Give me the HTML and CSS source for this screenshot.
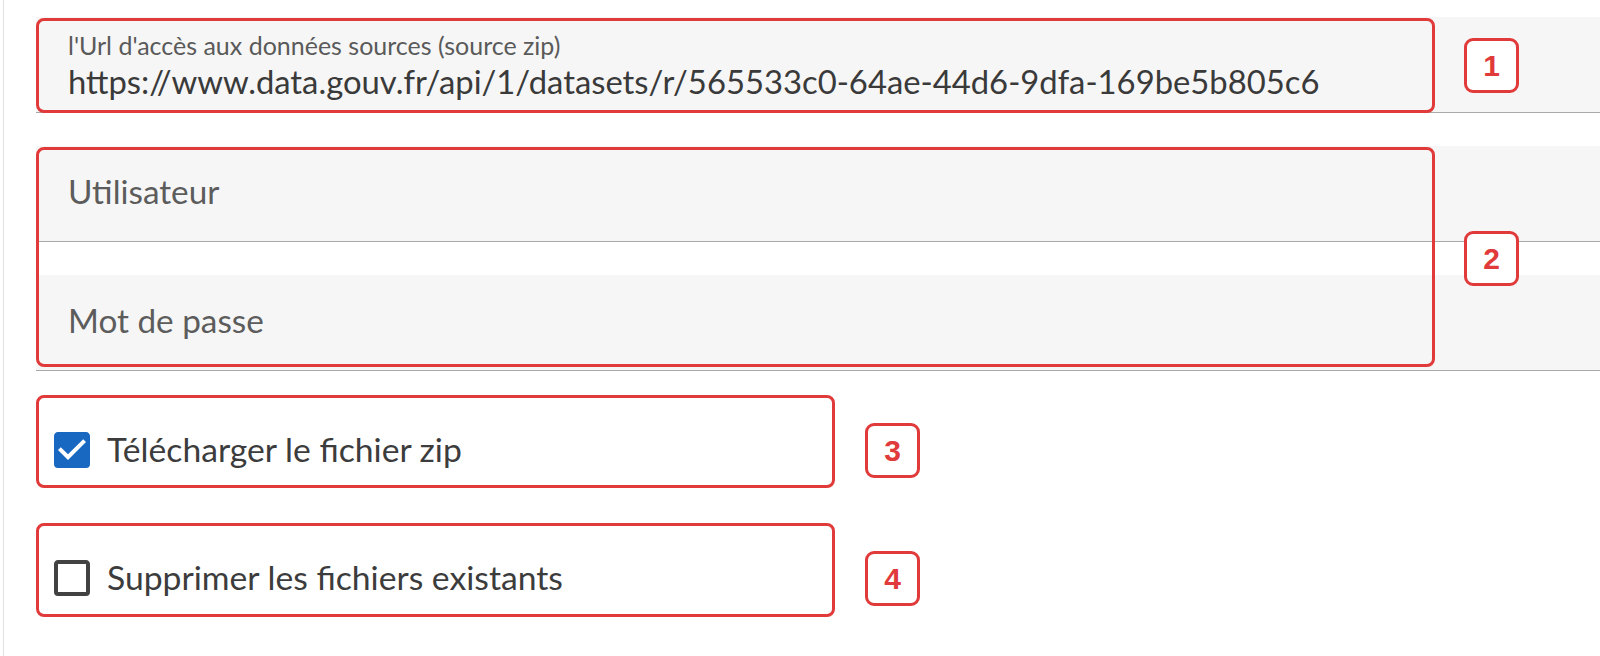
FILE: index.html
```html
<!DOCTYPE html>
<html lang="fr">
<head>
<meta charset="utf-8">
<title>Source</title>
<link rel="stylesheet" href="styles.css">
</head>
<body>
<div class="page">
  <form class="form">
    <div class="field field-filled">
      <div class="field-input has-value">
        <span class="field-label">l'Url d'accès aux données sources (source zip)</span>
        <span class="field-value">https://www.data.gouv.fr/api/1/datasets/r/565533c0-64ae-44d6-9dfa-169be5b805c6</span>
      </div>
    </div>
    <div class="field-details"></div>

    <div class="field field-filled">
      <div class="field-input">
        <span class="field-placeholder">Utilisateur</span>
      </div>
    </div>
    <div class="field-details"></div>

    <div class="field field-filled">
      <div class="field-input">
        <span class="field-placeholder">Mot de passe</span>
      </div>
    </div>
    <div class="field-details"></div>

    <label class="check check-first">
      <svg class="check-icon checked" viewBox="0 0 24 24"><path d="M10,17L5,12L6.41,10.58L10,14.17L17.59,6.58L19,8M19,3H5C3.89,3 3,3.89 3,5V19A2,2 0 0,0 5,21H19A2,2 0 0,0 21,19V5C21,3.89 20.1,3 19,3Z"/></svg>
      <span class="check-label">Télécharger le fichier zip</span>
    </label>

    <label class="check check-second">
      <svg class="check-icon" viewBox="0 0 24 24"><path d="M19,3H5C3.89,3 3,3.89 3,5V19A2,2 0 0,0 5,21H19A2,2 0 0,0 21,19V5C21,3.89 20.1,3 19,3M19,5V19H5V5H19Z"/></svg>
      <span class="check-label">Supprimer les fichiers existants</span>
    </label>
  </form>

  <div class="annot annot-1"></div>
  <div class="badge badge-1">1</div>
  <div class="annot annot-2"></div>
  <div class="badge badge-2">2</div>
  <div class="annot annot-3"></div>
  <div class="badge badge-3">3</div>
  <div class="annot annot-4"></div>
  <div class="badge badge-4">4</div>
</div>
</body>
</html>
```
FILE: styles.css
```css
html, body {
  margin: 0;
  padding: 0;
  background: #ffffff;
}

body {
  font-family: Lato, "Noto Sans", sans-serif;
  color: #333333;
  width: 1600px;
  height: 656px;
  overflow: hidden;
}

.page {
  position: relative;
  height: 656px;
  margin-left: 3px;
  border-left: 1px solid #e2e2e2;
  padding-left: 32px;
  padding-top: 17px;
  box-sizing: border-box;
}

.form {
  display: flex;
  flex-direction: column;
}

.field {
  height: 96px;
  box-sizing: border-box;
  background: #f6f6f6;
  border-bottom: 1px solid #a9a9a9;
  display: flex;
  flex-direction: column;
}

.field-input {
  flex: 1;
  padding-left: 32px;
  display: flex;
  flex-direction: column;
  justify-content: center;
}

.field-input.has-value {
  justify-content: flex-start;
  padding-top: 13px;
}

.field-label {
  font-size: 25px;
  line-height: 30px;
  color: #5a5a5a;
}

.field-value {
  font-size: 32.8px;
  line-height: 40px;
  margin-top: 2px;
  color: #3a3a3a;
  white-space: nowrap;
}

.field-placeholder {
  font-size: 33.3px;
  line-height: 40px;
  color: #5c5c5c;
  padding-bottom: 6px;
}

.field-details {
  height: 33px;
}

.check {
  display: flex;
  align-items: center;
  gap: 11px;
  padding-left: 12px;
  height: 48px;
}

.check-first {
  margin-top: 22px;
}

.check-second {
  margin-top: 80px;
}

.check-icon {
  width: 48px;
  height: 48px;
  fill: #424242;
  flex: none;
}

.check-icon.checked {
  fill: #1867c0;
}

.check-label {
  font-size: 33.7px;
  line-height: 40px;
  color: #3c3c3c;
  padding-bottom: 3px;
}

.annot {
  position: absolute;
  box-sizing: border-box;
  border: 3px solid #e03a3a;
  border-radius: 8px;
}

.annot-1 { left: 32px; top: 18px; width: 1399px; height: 95px; }
.annot-2 { left: 32px; top: 147px; width: 1399px; height: 220px; }
.annot-3 { left: 32px; top: 395px; width: 799px; height: 93px; }
.annot-4 { left: 32px; top: 523px; width: 799px; height: 94px; }

.badge {
  position: absolute;
  box-sizing: border-box;
  width: 55px;
  height: 55px;
  border: 3px solid #e03a3a;
  border-radius: 9px;
  background: #ffffff;
  color: #e03a3a;
  font-family: "Liberation Sans", Arial, sans-serif;
  font-weight: 700;
  font-size: 30px;
  line-height: 49px;
  text-align: center;
}

.badge-1 { left: 1460px; top: 38px; }
.badge-2 { left: 1460px; top: 231px; }
.badge-3 { left: 861px; top: 423px; }
.badge-4 { left: 861px; top: 551px; }
```
